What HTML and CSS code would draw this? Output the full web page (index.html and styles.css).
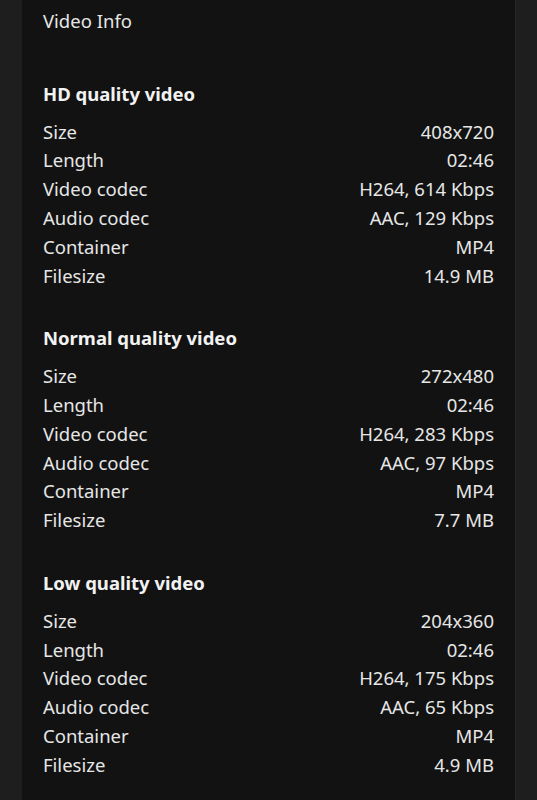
FILE: index.html
```html
<!DOCTYPE html>
<html lang="en">

<head>
    <meta charset="UTF-8">
    <meta name="viewport" content="width=device-width, initial-scale=1.0">
    <title>Video Info</title>
    <link rel="stylesheet" href="styles.css">
</head>

<body>
    <div class="panel">
        <div class="title">Video Info</div>

        <div class="section">
            <h3>HD quality video</h3>
            <ul class="rows">
                <li><span>Size</span><span>408x720</span></li>
                <li><span>Length</span><span>02:46</span></li>
                <li><span>Video codec</span><span>H264, 614 Kbps</span></li>
                <li><span>Audio codec</span><span>AAC, 129 Kbps</span></li>
                <li><span>Container</span><span>MP4</span></li>
                <li><span>Filesize</span><span>14.9 MB</span></li>
            </ul>
        </div>

        <div class="section">
            <h3>Normal quality video</h3>
            <ul class="rows">
                <li><span>Size</span><span>272x480</span></li>
                <li><span>Length</span><span>02:46</span></li>
                <li><span>Video codec</span><span>H264, 283 Kbps</span></li>
                <li><span>Audio codec</span><span>AAC, 97 Kbps</span></li>
                <li><span>Container</span><span>MP4</span></li>
                <li><span>Filesize</span><span>7.7 MB</span></li>
            </ul>
        </div>

        <div class="section">
            <h3>Low quality video</h3>
            <ul class="rows">
                <li><span>Size</span><span>204x360</span></li>
                <li><span>Length</span><span>02:46</span></li>
                <li><span>Video codec</span><span>H264, 175 Kbps</span></li>
                <li><span>Audio codec</span><span>AAC, 65 Kbps</span></li>
                <li><span>Container</span><span>MP4</span></li>
                <li><span>Filesize</span><span>4.9 MB</span></li>
            </ul>
        </div>
    </div>
</body>

</html>
```

FILE: styles.css
```css
* {
    margin: 0;
    padding: 0;
    list-style: none;
}

body {
    background: #1e1e1e;
    font-family: "Noto Sans", "Open Sans", sans-serif;
    font-size: 18.5px;
    line-height: 28.8px;
    color: #e6e6e6;
}

.panel {
    width: 451px;
    min-height: 800px;
    margin-left: 22px;
    padding: 7px 21px 0;
    background: #121212;
    border-right: 1px solid #262626;
}

.title {
    margin-bottom: 44px;
}

.section {
    margin-top: 34px;
}

.section h3 {
    font-size: 18.5px;
    font-weight: bold;
    color: #f2f2f2;
    margin-bottom: 9px;
}

.rows li {
    display: flex;
    justify-content: space-between;
}
```
